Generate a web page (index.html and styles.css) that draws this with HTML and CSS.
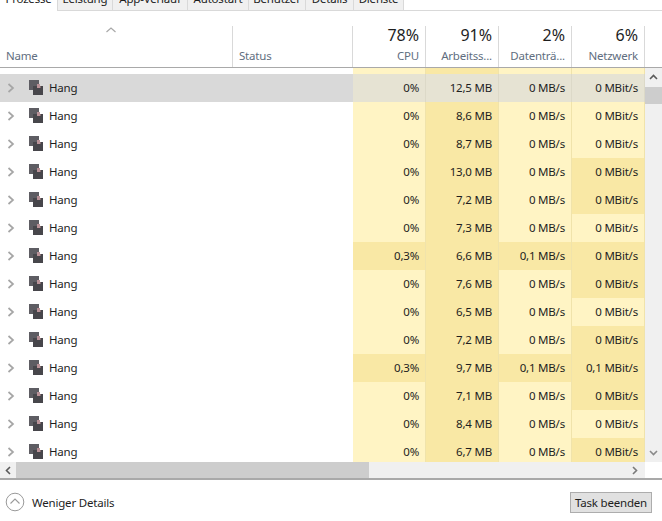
FILE: index.html
```html
<!DOCTYPE html>
<html lang="de">
<head>
<meta charset="utf-8">
<title>Task-Manager</title>
<link rel="stylesheet" href="styles.css">
</head>
<body>
<svg class="defs" width="0" height="0" aria-hidden="true">
  <symbol id="app" viewBox="0 0 16 16">
    <rect x="1" y="0" width="10" height="10" fill="#5e5d63"/>
    <rect x="5" y="6" width="10" height="9" fill="#47464b"/>
    <rect x="9" y="4" width="3" height="4" fill="#b99298"/>
    <rect x="12" y="6" width="1" height="2" fill="#80696e"/>
  </symbol>
  <symbol id="chev" viewBox="0 0 8 10">
    <path d="M1.5 1 L6 5 L1.5 9" fill="none" stroke="#a6a6a6" stroke-width="1.7"/>
  </symbol>
</svg>
<main class="app">
  <nav class="tabs">
    <span class="tab active">Prozesse</span>
    <span class="tab">Leistung</span>
    <span class="tab">App-Verlauf</span>
    <span class="tab">Autostart</span>
    <span class="tab">Benutzer</span>
    <span class="tab">Details</span>
    <span class="tab">Dienste</span>
  </nav>

  <header class="head">
    <div class="hcell hname">
      <svg class="sort" width="10" height="6" viewBox="0 0 10 6"><path d="M0.5 5 L5 1 L9.5 5" fill="none" stroke="#a8a8a8" stroke-width="1.2"/></svg>
      <span class="hlabel">Name</span>
    </div>
    <div class="hcell"><span class="hlabel">Status</span></div>
    <div class="hcell num"><span class="pct">78%</span><span class="hlabel">CPU</span></div>
    <div class="hcell num"><span class="pct">91%</span><span class="hlabel">Arbeitss...</span></div>
    <div class="hcell num"><span class="pct">2%</span><span class="hlabel">Datenträ...</span></div>
    <div class="hcell num"><span class="pct">6%</span><span class="hlabel">Netzwerk</span></div>
  </header>

  <section class="body">
    <div class="list">
      <div class="row stub"><div></div><div></div><div class="y"></div><div class="y hot"></div><div class="y"></div><div class="y"></div></div>

      <div class="row sel">
        <div class="name"><svg class="chev"><use href="#chev"/></svg><svg class="ico"><use href="#app"/></svg><span>Hang</span></div><div></div>
        <div class="y">0%</div><div class="y">12,5 MB</div><div class="y">0 MB/s</div><div class="y">0 MBit/s</div>
      </div>
      <div class="row">
        <div class="name"><svg class="chev"><use href="#chev"/></svg><svg class="ico"><use href="#app"/></svg><span>Hang</span></div><div></div>
        <div class="y">0%</div><div class="y hot">8,6 MB</div><div class="y">0 MB/s</div><div class="y">0 MBit/s</div>
      </div>
      <div class="row">
        <div class="name"><svg class="chev"><use href="#chev"/></svg><svg class="ico"><use href="#app"/></svg><span>Hang</span></div><div></div>
        <div class="y">0%</div><div class="y hot">8,7 MB</div><div class="y">0 MB/s</div><div class="y">0 MBit/s</div>
      </div>
      <div class="row">
        <div class="name"><svg class="chev"><use href="#chev"/></svg><svg class="ico"><use href="#app"/></svg><span>Hang</span></div><div></div>
        <div class="y">0%</div><div class="y hot">13,0 MB</div><div class="y">0 MB/s</div><div class="y hot">0 MBit/s</div>
      </div>
      <div class="row">
        <div class="name"><svg class="chev"><use href="#chev"/></svg><svg class="ico"><use href="#app"/></svg><span>Hang</span></div><div></div>
        <div class="y">0%</div><div class="y hot">7,2 MB</div><div class="y">0 MB/s</div><div class="y hot">0 MBit/s</div>
      </div>
      <div class="row">
        <div class="name"><svg class="chev"><use href="#chev"/></svg><svg class="ico"><use href="#app"/></svg><span>Hang</span></div><div></div>
        <div class="y">0%</div><div class="y hot">7,3 MB</div><div class="y">0 MB/s</div><div class="y">0 MBit/s</div>
      </div>
      <div class="row">
        <div class="name"><svg class="chev"><use href="#chev"/></svg><svg class="ico"><use href="#app"/></svg><span>Hang</span></div><div></div>
        <div class="y hot">0,3%</div><div class="y hot">6,6 MB</div><div class="y hot">0,1 MB/s</div><div class="y hot">0 MBit/s</div>
      </div>
      <div class="row">
        <div class="name"><svg class="chev"><use href="#chev"/></svg><svg class="ico"><use href="#app"/></svg><span>Hang</span></div><div></div>
        <div class="y">0%</div><div class="y hot">7,6 MB</div><div class="y">0 MB/s</div><div class="y hot">0 MBit/s</div>
      </div>
      <div class="row">
        <div class="name"><svg class="chev"><use href="#chev"/></svg><svg class="ico"><use href="#app"/></svg><span>Hang</span></div><div></div>
        <div class="y">0%</div><div class="y hot">6,5 MB</div><div class="y">0 MB/s</div><div class="y">0 MBit/s</div>
      </div>
      <div class="row">
        <div class="name"><svg class="chev"><use href="#chev"/></svg><svg class="ico"><use href="#app"/></svg><span>Hang</span></div><div></div>
        <div class="y">0%</div><div class="y hot">7,2 MB</div><div class="y">0 MB/s</div><div class="y hot">0 MBit/s</div>
      </div>
      <div class="row">
        <div class="name"><svg class="chev"><use href="#chev"/></svg><svg class="ico"><use href="#app"/></svg><span>Hang</span></div><div></div>
        <div class="y hot">0,3%</div><div class="y hot">9,7 MB</div><div class="y hot">0,1 MB/s</div><div class="y hot">0,1 MBit/s</div>
      </div>
      <div class="row">
        <div class="name"><svg class="chev"><use href="#chev"/></svg><svg class="ico"><use href="#app"/></svg><span>Hang</span></div><div></div>
        <div class="y">0%</div><div class="y hot">7,1 MB</div><div class="y">0 MB/s</div><div class="y hot">0 MBit/s</div>
      </div>
      <div class="row">
        <div class="name"><svg class="chev"><use href="#chev"/></svg><svg class="ico"><use href="#app"/></svg><span>Hang</span></div><div></div>
        <div class="y">0%</div><div class="y hot">8,4 MB</div><div class="y">0 MB/s</div><div class="y">0 MBit/s</div>
      </div>
      <div class="row">
        <div class="name"><svg class="chev"><use href="#chev"/></svg><svg class="ico"><use href="#app"/></svg><span>Hang</span></div><div></div>
        <div class="y">0%</div><div class="y hot">6,7 MB</div><div class="y">0 MB/s</div><div class="y hot">0 MBit/s</div>
      </div>
    </div>

    <div class="vbar">
      <svg class="arrow" width="9" height="6" viewBox="0 0 9 6"><path d="M1 5 L4.5 1.5 L8 5" fill="none" stroke="#5a5a5a" stroke-width="1.6"/></svg>
      <div class="vthumb"></div>
      <svg class="arrow arrow-down" width="9" height="6" viewBox="0 0 9 6"><path d="M1 1 L4.5 4.5 L8 1" fill="none" stroke="#8a8a8a" stroke-width="1.6"/></svg>
    </div>
  </section>

  <div class="hbar">
    <div class="hbtn"><svg width="6" height="9" viewBox="0 0 6 9"><path d="M5 1 L1.5 4.5 L5 8" fill="none" stroke="#5a5a5a" stroke-width="1.6"/></svg></div>
    <div class="hthumb"></div>
    <div class="hbtn end"><svg width="6" height="9" viewBox="0 0 6 9"><path d="M1 1 L4.5 4.5 L1 8" fill="none" stroke="#7a7a7a" stroke-width="1.6"/></svg></div>
  </div>

  <footer class="foot">
    <div class="less">
      <svg width="20" height="20" viewBox="0 0 20 20"><circle cx="10" cy="10" r="8.8" fill="none" stroke="#9a9a9a" stroke-width="1"/><path d="M5.5 11.5 L10 7 L14.5 11.5" fill="none" stroke="#9a9a9a" stroke-width="1.1"/></svg>
      <span>Weniger Details</span>
    </div>
    <button class="end-task" type="button">Task beenden</button>
  </footer>
</main>
</body>
</html>
```
FILE: styles.css
```css
* { box-sizing: border-box; }

html, body {
  margin: 0;
  padding: 0;
  background: #fff;
}

body {
  width: 662px;
  height: 521px;
  overflow: hidden;
  font-family: "Noto Sans", "Open Sans", "Liberation Sans", sans-serif;
  font-size: 11.5px;
  letter-spacing: -0.2px;
  color: #1e1e1e;
}

.defs { position: absolute; }

.app {
  display: flex;
  flex-direction: column;
  height: 521px;
}

/* Tabs: the top of the strip is cut off by the screenshot */
.tabs {
  display: flex;
  height: 11px;
  align-items: flex-end;
  overflow: hidden;
  background: linear-gradient(#fff 10px, #d9d9d9 10px);
  flex: none;
}

.tab {
  height: 23px;
  line-height: 19px;
  text-align: center;
  background: #f0f0f0;
  border: 1px solid #d9d9d9;
  border-left-width: 0;
  color: #1e1e1e;
  flex: none;
}
.tab:nth-child(2) { width: 55px; }
.tab:nth-child(3) { width: 75px; }
.tab:nth-child(4) { width: 61px; }
.tab:nth-child(5) { width: 57px; }
.tab:nth-child(6) { width: 48px; }
.tab:nth-child(7) { width: 50px; }
.tab.active {
  width: 58px;
  background: #fff;
  border-bottom: 0;
}

/* Shared columns */
.head, .row {
  display: grid;
  grid-template-columns: 233px 120px 73px 73px 73px 73px;
}

.head {
  height: 57px;
  padding: 15px 0 0;
  border-bottom: 1px solid #a9a9a9;
  flex: none;
}

.hcell {
  position: relative;
  display: flex;
  flex-direction: column;
  justify-content: flex-end;
  border-right: 1px solid #d9d9d9;
  padding: 0 6px 3px;
  min-width: 0;
}

.hlabel {
  color: #5f6e80;
  line-height: 16px;
  white-space: nowrap;
}

.hname .sort {
  position: absolute;
  left: 106px;
  top: 1px;
}

.num { align-items: flex-end; }

.pct {
  font-size: 16px;
  letter-spacing: 0;
  line-height: 18px;
  margin-bottom: 4px;
  color: #1e1e1e;
}

/* List */
.body {
  display: flex;
  height: 394px;
  flex: none;
}

.list {
  width: 645px;
  overflow: hidden;
}

.row {
  height: 28px;
  align-items: stretch;
  line-height: 28px;
}

.row.stub { height: 6px; }

.name {
  display: flex;
  align-items: center;
  padding-left: 7px;
}

.chev { width: 8px; height: 10px; flex: none; }
.ico { width: 16px; height: 16px; margin-left: 13px; flex: none; }
.name span { margin-left: 5px; }

.y {
  background: #fff4c4;
  border-right: 1px solid #f0e3ab;
  text-align: right;
  padding-right: 6px;
  white-space: nowrap;
}
.y.hot { background: #f9e8a5; }

.sel { background: #d9d9d9; }
.sel .y {
  background: #e6e3d3;
  border-right-color: #dcd9c8;
}

/* Scrollbars */
.vbar {
  width: 17px;
  background: #f0f0f0;
  display: flex;
  flex-direction: column;
  align-items: center;
  padding-top: 6px;
}

.arrow { flex: none; }
.arrow-down { margin-top: auto; margin-bottom: 6px; }

.vthumb {
  width: 17px;
  height: 17px;
  margin-top: 7px;
  background: #cdcdcd;
}

.hbar {
  display: flex;
  width: 645px;
  height: 16px;
  background: #f0f0f0;
  flex: none;
}

.hbtn {
  width: 16px;
  display: flex;
  align-items: center;
  justify-content: center;
  flex: none;
}
.hbtn.end { margin-left: auto; width: 20px; }

.hthumb {
  width: 353px;
  background: #cdcdcd;
}

/* Footer */
.foot {
  flex: 1;
  display: flex;
  align-items: center;
  justify-content: space-between;
  border-top: 2px solid #a9a9a9;
  padding: 3px 10px 0 5px;
}

.less {
  display: flex;
  align-items: center;
  gap: 7px;
  color: #1e1e1e;
}

.end-task {
  width: 82px;
  height: 21px;
  padding: 0;
  font: inherit;
  letter-spacing: inherit;
  color: #1e1e1e;
  background: #e1e1e1;
  border: 1px solid #adadad;
}
```
